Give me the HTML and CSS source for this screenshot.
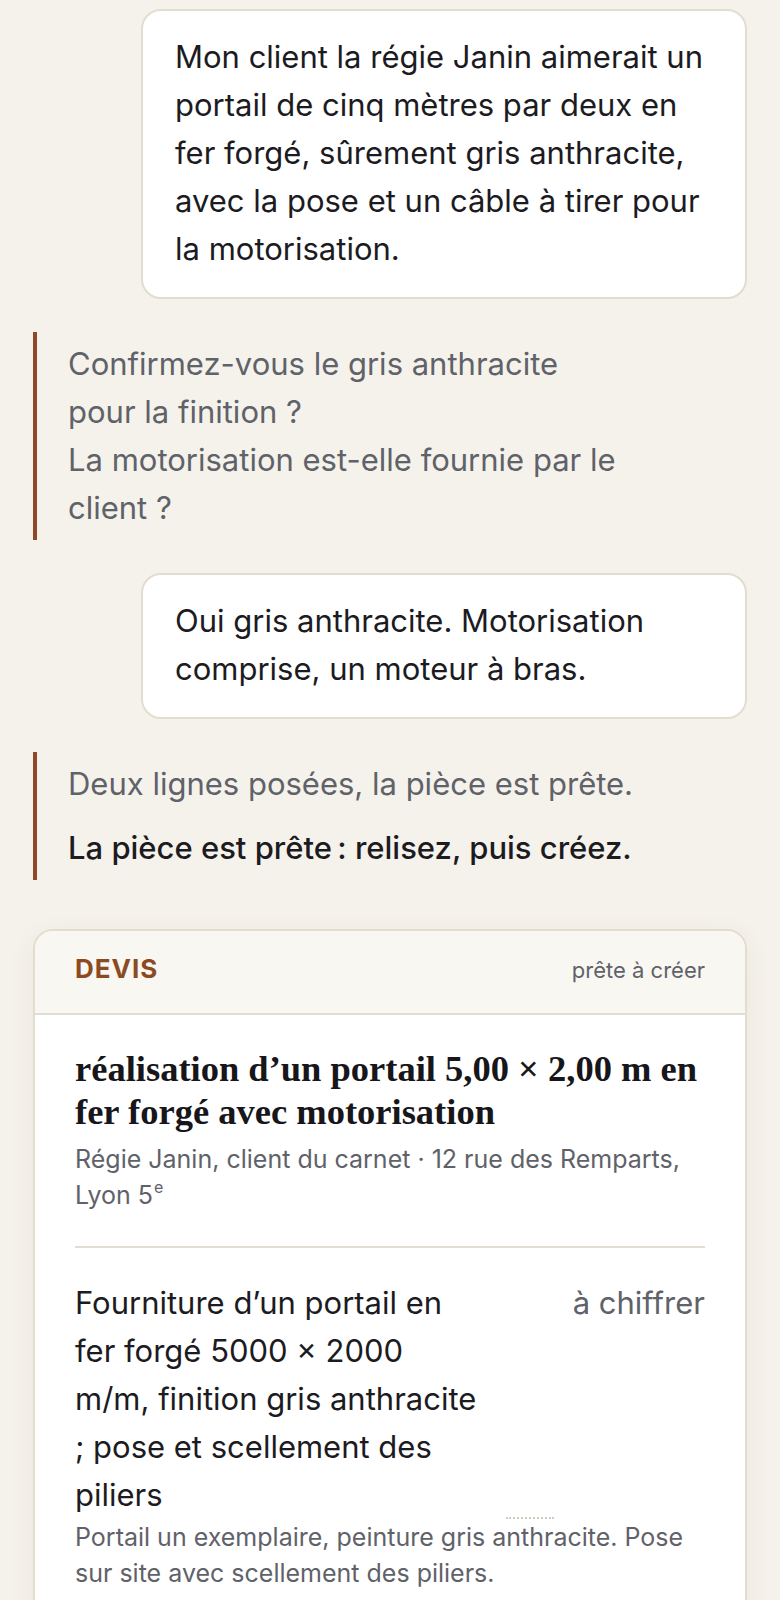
FILE: index.html
```html
<!DOCTYPE html>
<html lang="fr">
<head>
<meta charset="UTF-8">
<title>Devis – conversation</title>
<link rel="stylesheet" href="styles.css">
</head>
<body>

<main class="thread">
    <div class="msg msg-user">
        Mon client la régie Janin aimerait un portail de cinq mètres par deux en fer forgé, sûrement gris anthracite, avec la pose et un câble à tirer pour la motorisation.
    </div>

    <div class="msg msg-bot msg-questions">
        <p class="ask">Confirmez-vous le gris anthracite pour la finition&nbsp;?</p>
        <p class="ask">La motorisation est-elle fournie par le client&nbsp;?</p>
    </div>

    <div class="msg msg-user">
        Oui gris anthracite. Motorisation comprise, un moteur à bras.
    </div>

    <div class="msg msg-bot">
        <p class="ask">Deux lignes posées, la pièce est prête.</p>
        <p class="ready">La pièce est prête&#8239;: relisez, puis créez.</p>
    </div>

    <!-- --- Pièce proposée --- -->
    <section class="card">
        <header class="card-head">
            <span class="card-kind">DEVIS</span>
            <span class="card-state">prête à créer</span>
        </header>
        <div class="card-body">
            <h2 class="card-title">réalisation d’un portail 5,00&nbsp;×&nbsp;2,00&nbsp;m en fer forgé avec motorisation</h2>
            <p class="card-meta">Régie Janin, client du carnet · 12 rue des Remparts, Lyon 5<span class="exp">e</span></p>
            <hr class="card-rule">
            <div class="line">
                <div class="line-label">Fourniture d’un portail en fer forgé 5000 × 2000 m/m, finition gris anthracite ; pose et scellement des piliers</div>
                <span class="line-qty"></span>
                <div class="line-price">à chiffrer</div>
                <p class="line-note">Portail un exemplaire, peinture gris anthracite. Pose sur site avec scellement des piliers.</p>
            </div>
        </div>
    </section>
</main>

</body>
</html>
```

FILE: styles.css
```css
/* --- Page --- */
body {
    margin:0;
    background:#f5f2eb;
    color:#1c1b1f;
    font-family: Inter, "Noto Sans", sans-serif;
}

.thread {
    display:flex;
    flex-direction:column;
    gap:33px;
    padding:9px 33px 40px;
}

/* --- Messages --- */
.msg-user {
    align-self:flex-end;
    width:606px;
    box-sizing:border-box;
    background:#fff;
    border:2px solid #e3ddd0;
    border-radius:20px;
    padding:22px 36px 24px 32px;
    font-size:31px;
    line-height:48px;
}

.msg-bot {
    align-self:flex-start;
    width:606px;
    box-sizing:border-box;
    border-left:4px solid #8c4a2a;
    padding:8px 0 8px 31px;
    font-size:31px;
    line-height:48px;
}
.msg-bot p { margin:0; }
.msg-questions p { max-width:557px; }
.msg-bot p + .ready { margin-top:16px; }
.ask { color:#5f6269; }
.ready { color:#1c1b1f; font-weight:500; }

/* --- Carte devis --- */
.card {
    margin-top:16px;
    background:#fff;
    border:2px solid #e3ddd0;
    border-radius:20px;
    overflow:hidden;
    box-shadow:0 6px 28px rgba(80,60,30,0.06);
}

.card-head {
    display:flex;
    justify-content:space-between;
    align-items:baseline;
    padding:24px 40px 29px;
    background:#f9f7f2;
    border-bottom:2px solid #e3ddd0;
    line-height:28px;
}
.card-kind {
    font-size:26px;
    font-weight:700;
    letter-spacing:1px;
    color:#8c4a22;
}
.card-state { font-size:22px; color:#5f6269; }

.card-body { padding:32px 40px 40px; }

.card-title {
    margin:0;
    font-family:"Liberation Serif", "DejaVu Serif", serif;
    font-size:36.5px;
    line-height:43px;
    font-weight:700;
    color:#17161a;
}

.card-meta {
    margin:8px 0 0;
    font-size:25px;
    line-height:36px;
    color:#5f6269;
}
.card-meta .exp {
    font-size:16px;
    line-height:0;
    vertical-align:11px;
    margin-left:1px;
}

.card-rule {
    margin:33px 0 0;
    border:0;
    border-top:2px solid #e3ddd0;
}

/* --- Ligne du devis --- */
.line {
    display:grid;
    grid-template-columns:403px auto 1fr;
    margin-top:31px;
}
.line-label { font-size:31px; line-height:48px; }
.line-qty {
    align-self:end;
    width:48px;
    height:10px;
    margin-left:28px;
    border-bottom:2px dotted #d2ccc0;
}
.line-price {
    font-size:31px;
    line-height:48px;
    color:#5f6269;
    text-align:right;
    white-space:nowrap;
}
.line-note {
    grid-column:1 / -1;
    margin:0;
    font-size:25px;
    line-height:36px;
    color:#5f6269;
}
```
